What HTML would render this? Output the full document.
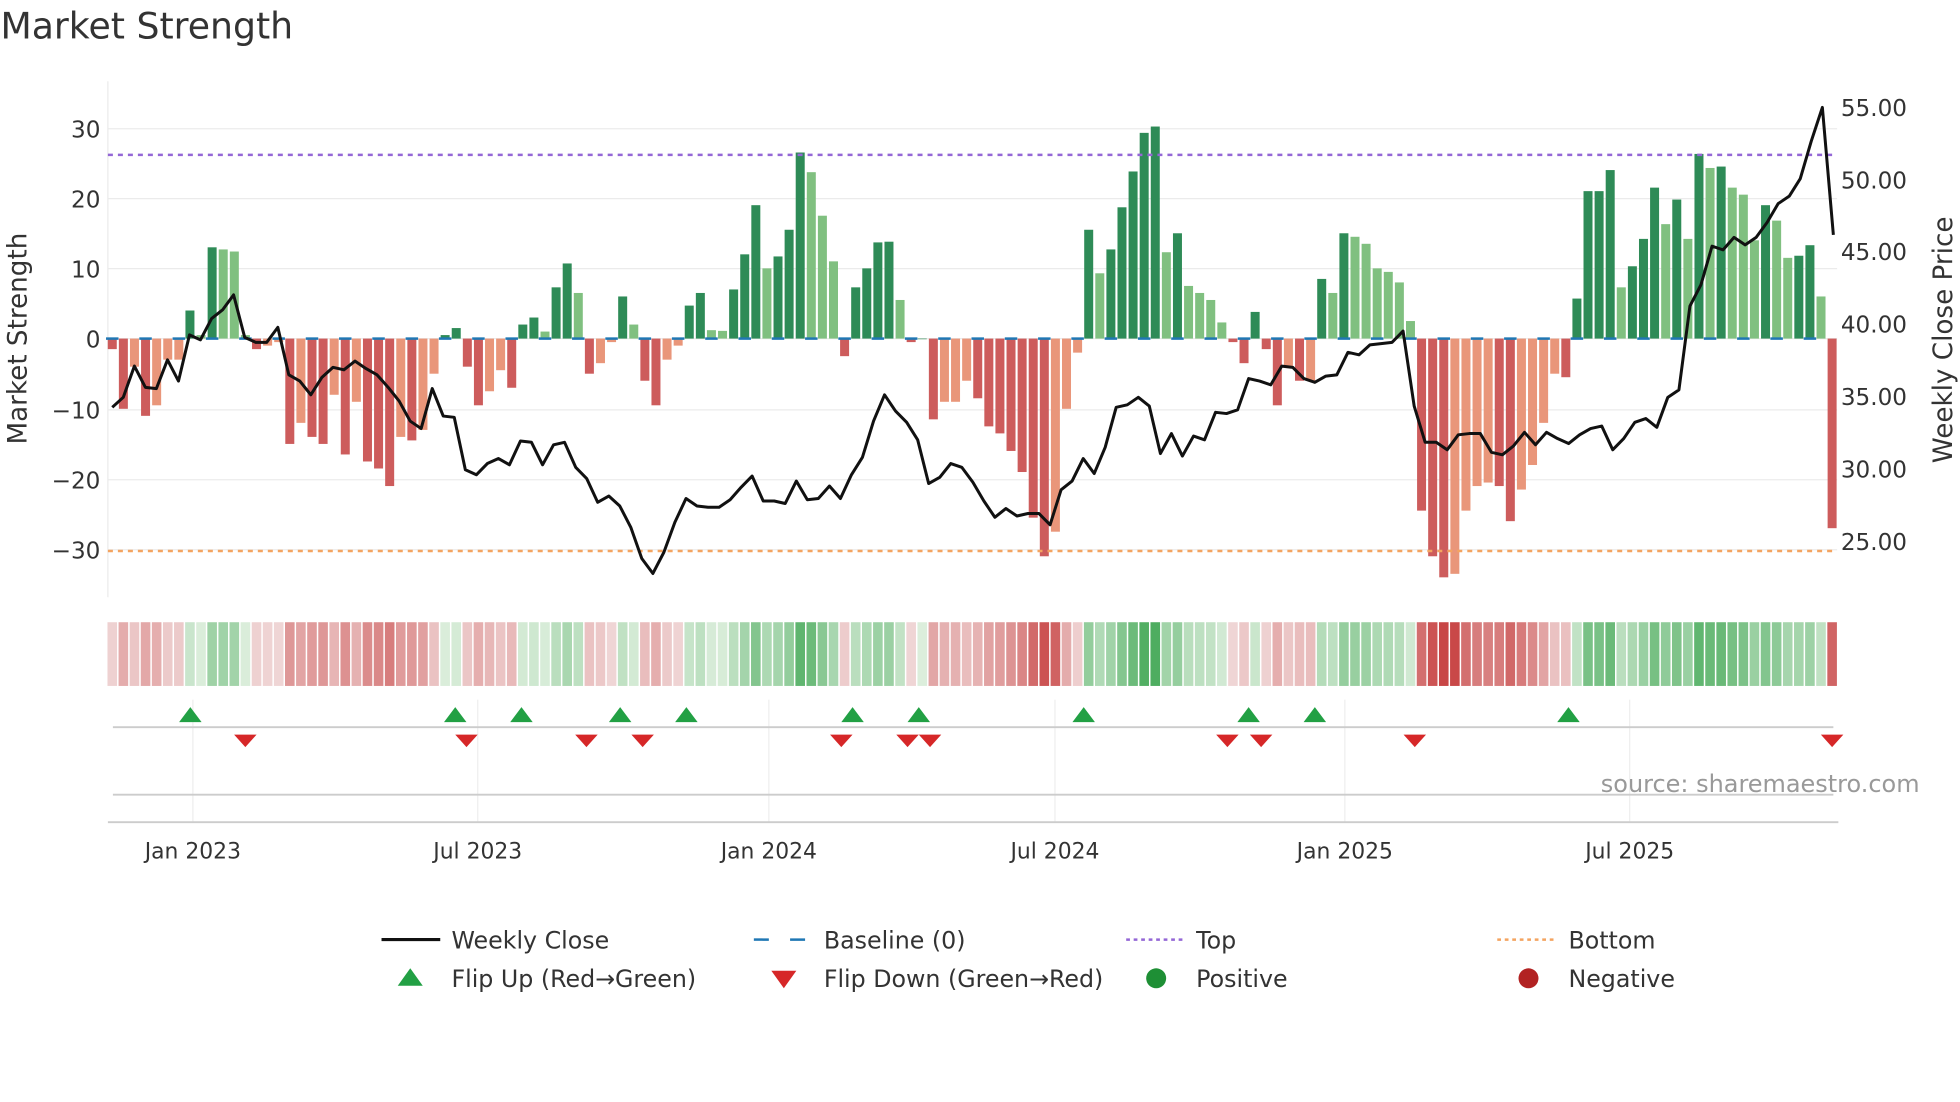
<!DOCTYPE html>
<html><head><meta charset="utf-8"><style>
html,body{margin:0;padding:0;background:#fff;width:1960px;height:1102px;overflow:hidden}
svg{display:block}
text{font-family:"DejaVu Sans","Liberation Sans",sans-serif;fill:#333}
</style></head><body>
<svg id="s" width="1960" height="1102" viewBox="0 0 1568 882" xmlns="http://www.w3.org/2000/svg">
<text x="0" y="31" font-size="29">Market Strength</text>
<g id="grid" stroke="#ebebeb" stroke-width="1">
<line x1="86" x2="1470" y1="103" y2="103"/><line x1="86" x2="1470" y1="159" y2="159"/><line x1="86" x2="1470" y1="215" y2="215"/><line x1="86" x2="1470" y1="271" y2="271"/><line x1="86" x2="1470" y1="328" y2="328"/><line x1="86" x2="1470" y1="384" y2="384"/><line x1="86" x2="1470" y1="440" y2="440"/>
<line x1="86" x2="86" y1="65" y2="478"/>
</g>
<g id="bars"></g>
<g id="base"></g>
<line x1="86" x2="1470" y1="124" y2="124" stroke="#9467d6" stroke-width="2" stroke-dasharray="4,4"/>
<line x1="86" x2="1470" y1="441" y2="441" stroke="#f4a460" stroke-width="2" stroke-dasharray="4,4"/>
<polyline id="price" fill="none" stroke="#111" stroke-width="2.4" stroke-linejoin="round"/>
<g font-size="18.5" text-anchor="end">
<text x="80" y="110">30</text><text x="80" y="166">20</text><text x="80" y="222">10</text><text x="80" y="278">0</text><text x="80" y="335">−10</text><text x="80" y="391">−20</text><text x="80" y="447">−30</text>
</g>
<g font-size="18.5">
<text x="1473" y="93">55.00</text><text x="1473" y="151">50.00</text><text x="1473" y="208">45.00</text><text x="1473" y="266">40.00</text><text x="1473" y="324">35.00</text><text x="1473" y="382">30.00</text><text x="1473" y="440">25.00</text>
</g>
<text transform="translate(21,271) rotate(-90)" font-size="21" text-anchor="middle">Market Strength</text>
<text transform="translate(1562,272) rotate(-90)" font-size="21" text-anchor="middle">Weekly Close Price</text>
<g id="heat"></g>
<g stroke="#eee" stroke-width="1">
<line x1="154" x2="154" y1="560" y2="658"/><line x1="382" x2="382" y1="560" y2="658"/><line x1="615" x2="615" y1="560" y2="658"/><line x1="844" x2="844" y1="560" y2="658"/><line x1="1076" x2="1076" y1="560" y2="658"/><line x1="1304" x2="1304" y1="560" y2="658"/>
</g>
<line x1="90" x2="1467" y1="582" y2="582" stroke="#ccc" stroke-width="1.5"/>
<line x1="90" x2="1467" y1="636" y2="636" stroke="#ccc" stroke-width="1.5"/>
<line x1="86" x2="1471" y1="658" y2="658" stroke="#ccc" stroke-width="1.5"/>
<g id="flips"></g>
<text x="1536" y="634" font-size="19.2" text-anchor="end" style="fill:#999">source: sharemaestro.com</text>
<g font-size="17.5" text-anchor="middle">
<text x="154" y="687">Jan 2023</text><text x="382" y="687">Jul 2023</text><text x="615" y="687">Jan 2024</text><text x="844" y="687">Jul 2024</text><text x="1076" y="687">Jan 2025</text><text x="1304" y="687">Jul 2025</text>
</g>
<g font-size="19">
<line x1="305" x2="352" y1="752" y2="752" stroke="#111" stroke-width="2.5"/><text x="361" y="759">Weekly Close</text>
<line x1="603" x2="646" y1="752" y2="752" stroke="#1f77b4" stroke-width="2" stroke-dasharray="12,17"/><text x="659" y="759">Baseline (0)</text>
<line x1="901" x2="946" y1="752" y2="752" stroke="#9467d6" stroke-width="2" stroke-dasharray="3,3"/><text x="957" y="759">Top</text>
<line x1="1198" x2="1243" y1="752" y2="752" stroke="#f4a460" stroke-width="2" stroke-dasharray="3,3"/><text x="1255" y="759">Bottom</text>
<polygon points="318,789 338,789 328,775" fill="#22a044"/><text x="361" y="790">Flip Up (Red→Green)</text>
<polygon points="617,777 637,777 627,791" fill="#d62728"/><text x="659" y="790">Flip Down (Green→Red)</text>
<circle cx="925" cy="783" r="8" fill="#1e8f35"/><text x="957" y="790">Positive</text>
<circle cx="1223" cy="783" r="8" fill="#b22222"/><text x="1255" y="790">Negative</text>
</g>
</svg>
<script>
var v=[-1.5,-10,-4,-11,-9.5,-3,-3,4,0.5,13,12.7,12.4,0.5,-1.5,-1,-0.5,-15,-12,-14,-15,-8,-16.5,-9,-17.5,-18.5,-21,-14,-14.5,-13,-5,0.5,1.5,-4,-9.5,-7.5,-4.5,-7,2,3,1,7.3,10.7,6.5,-5,-3.5,-0.5,6,2,-6,-9.5,-3,-1,4.7,6.5,1.2,1.1,7,12,19,10,11.7,15.5,26.5,23.7,17.5,11,-2.5,7.3,10,13.7,13.8,5.5,-0.5,0,-11.5,-9,-9,-6,-8.5,-12.5,-13.5,-16,-19,-25.5,-31,-27.5,-10,-2,15.5,9.3,12.7,18.7,23.8,29.3,30.2,12.3,15,7.5,6.5,5.5,2.3,-0.5,-3.5,3.8,-1.5,-9.5,-4,-6,-6,8.5,6.5,15,14.5,13.5,10,9.5,8,2.5,-24.5,-31,-34,-33.5,-24.5,-21,-20.5,-21,-26,-21.5,-18,-12,-5,-5.5,5.7,21,21,24,7.3,10.3,14.2,21.5,16.3,19.8,14.2,26.3,24.3,24.5,21.5,20.5,14,19,16.8,11.5,11.8,13.3,6,-27];
var p=[326,318,293,310,311,288,305,268,272,255,248,236,270,274,274,262,300,305,316,302,294,296,289,295,300,310,321,337,343,311,333,334,376,380,371,367,372,353,354,372,356,354,374,383,402,397,405,422,447,459,442,418,399,405,406,406,400,390,381,401,401,403,385,400,399,389,399,380,366,337,316,329,338,352,387,382,371,374,386,401,414,407,413,411,411,420,392,385,367,379,358,326,324,318,325,363,347,365,349,352,330,331,328,303,305,308,293,294,303,306,301,300,282,284,276,275,274,265,325,354,354,360,348,347,347,362,364,357,346,356,346,351,355,348,343,341,360,351,338,335,342,318,312,245,228,197,200,190,196,190,178,163,157,143,113,86,188];
var n=v.length,x0=89.5,dx=(1466-89.5)/(n-1),y0=271,k=5.62,ns="http://www.w3.org/2000/svg";
function el(g,t,a){var e=document.createElementNS(ns,t);for(var q in a)e.setAttribute(q,a[q]);document.getElementById(g).appendChild(e);}
for(var i=0;i<n;i++){var x=x0+i*dx,val=v[i],pr=i?v[i-1]:0,c;
 if(val>=0)c=(val>=pr)?"#2e8b57":"#80c080";else c=(val<pr)?"#cd5c5c":"#e9967a";
 var h=Math.abs(val)*k;el("bars","rect",{x:x-3.6,y:val>=0?y0-h:y0,width:7.2,height:Math.max(h,0.5),fill:c});
 if(i%3==0)el("base","line",{x1:x-5,x2:x+5,y1:y0,y2:y0,stroke:"#1f77b4","stroke-width":2});
 var t=Math.min(Math.abs(val)/34,1),hc;
 if(val>=0){hc="rgb("+Math.round(220-(220-60)*t)+","+Math.round(238-(238-165)*t)+","+Math.round(220-(220-80)*t)+")";}
 else{hc="rgb("+Math.round(240-(240-200)*t)+","+Math.round(215-(215-70)*t)+","+Math.round(215-(215-70)*t)+")";}
 el("heat","rect",{x:x-dx/2+0.6,y:498,width:dx-1.2,height:51,fill:hc});}
var pts=[],m=p.length,pdx=(1467-89.5)/(m-1);
for(var j=0;j<m;j++)pts.push((x0+j*pdx).toFixed(1)+","+p[j]);
document.getElementById("price").setAttribute("points",pts.join(" "));
[152,364,417,496,549,682,735,867,999,1052,1255].forEach(function(x){el("flips","polygon",{points:(x-9)+",578 "+(x+9)+",578 "+x+",566",fill:"#22a044"});});
[196,373,469,514,673,726,744,982,1009,1132,1466].forEach(function(x){el("flips","polygon",{points:(x-9)+",588 "+(x+9)+",588 "+x+",598",fill:"#d62728"});});
</script>
</body></html>
